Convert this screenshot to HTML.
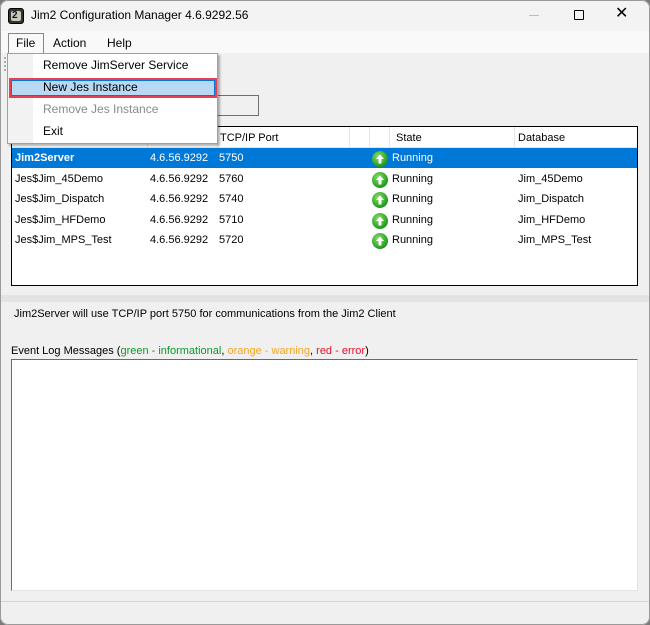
<!DOCTYPE html>
<html><head><style>
*{margin:0;padding:0;box-sizing:border-box}
body{width:650px;height:625px;background:#7a7a7a;font-family:"Liberation Sans",sans-serif;font-size:11px;color:#000;position:relative;overflow:hidden}
.win{position:absolute;left:0;top:0;width:650px;height:625px;background:#f0f0f0;border-radius:8px;overflow:hidden}
.bord{position:absolute;left:0;top:0;width:650px;height:625px;border-radius:8px;box-shadow:inset 0 0 0 1px #9a9a9a;pointer-events:none}
.a{position:absolute;white-space:nowrap}
.title{position:absolute;left:0;top:0;width:650px;height:31px;background:#f3f3f3}
.menubar{position:absolute;left:0;top:31px;width:650px;height:22px;background:#f9f9f9}
.list{position:absolute;left:11px;top:126px;width:627px;height:160px;background:#fff;border:1px solid #000}
.hdr{position:absolute;left:0;top:0;width:625px;height:21px;background:#fff;border-bottom:1px solid #e5e5e5}
.hs{position:absolute;top:0;width:1px;height:21px;background:#e5e5e5}
.row{position:absolute;left:0;width:625px;height:20px}
.row .a{top:4px}
.ic{position:absolute;width:16px;height:16px;top:3px!important;border-radius:50%;background:radial-gradient(circle at 40% 35%,#8ee06a,#1e9a1e 70%,#0e6a0e);}
.menu{position:absolute;left:7px;top:53px;width:211px;height:91px;background:#fff;border:1px solid #a0a0a0;box-shadow:2px 2px 2px rgba(0,0,0,.3)}
</style></head><body>
<div class="win">
<div class="title"></div>
<div class="a" style="left:8px;top:8px;width:16px;height:16px;background:#333;border-radius:3px;border:1px solid #000"><div style="position:absolute;left:2px;top:2px;width:10px;height:10px;background:#c8c8b8;border-radius:2px"></div><div class="a" style="left:3px;top:1px;font-size:10px;font-weight:bold;color:#111">2</div></div>
<div class="a" style="left:31px;top:8px;font-size:12px">Jim2 Configuration Manager 4.6.9292.56</div>
<div class="a" style="left:529px;top:15px;width:10px;height:1px;background:#bbb"></div>
<div class="a" style="left:574px;top:10px;width:10px;height:10px;border:1px solid #000;border-radius:1px"></div>
<div class="a" style="left:615px;top:4px;font-size:16px;line-height:20px">✕</div>
<div class="menubar"></div>
<div class="a" style="left:8px;top:33px;width:36px;height:21px;border:1px solid #888;border-bottom:none;background:#f9f9f9"></div>
<div class="a" style="left:16px;top:36px;font-size:12px">File</div>
<div class="a" style="left:53px;top:36px;font-size:12px">Action</div>
<div class="a" style="left:107px;top:36px;font-size:12px">Help</div>
<div class="a" style="left:4px;top:57px;width:2px;height:14px;border-left:2px dotted #aaa"></div>
<div class="a" style="left:215px;top:95px;width:44px;height:21px;border:1px solid #707070"></div>
<div class="list">
<div class="hdr">
<div class="hs" style="left:135px"></div><div class="hs" style="left:205px"></div><div class="hs" style="left:337px"></div><div class="hs" style="left:357px"></div><div class="hs" style="left:377px"></div><div class="hs" style="left:502px"></div>
<div class="a" style="left:208px;top:5px">TCP/IP Port</div>
<div class="a" style="left:384px;top:5px">State</div>
<div class="a" style="left:506px;top:5px">Database</div>
</div>
<div class="row" style="top:21px;background:#0078d7;color:#fff"><div class="a" style="left:3px;font-weight:bold">Jim2Server</div><div class="a" style="left:138px">4.6.56.9292</div><div class="a" style="left:207px">5750</div><svg class="a ic" style="left:360px" viewBox="0 0 16 16"><path d="M8 3.5L4 8h2.5v4.5h3V8H12z" fill="#fff"/></svg><div class="a" style="left:380px">Running</div></div>
<div class="row" style="top:42px"><div class="a" style="left:3px">Jes$Jim_45Demo</div><div class="a" style="left:138px">4.6.56.9292</div><div class="a" style="left:207px">5760</div><svg class="a ic" style="left:360px" viewBox="0 0 16 16"><path d="M8 3.5L4 8h2.5v4.5h3V8H12z" fill="#fff"/></svg><div class="a" style="left:380px">Running</div><div class="a" style="left:506px">Jim_45Demo</div></div>
<div class="row" style="top:62px"><div class="a" style="left:3px">Jes$Jim_Dispatch</div><div class="a" style="left:138px">4.6.56.9292</div><div class="a" style="left:207px">5740</div><svg class="a ic" style="left:360px" viewBox="0 0 16 16"><path d="M8 3.5L4 8h2.5v4.5h3V8H12z" fill="#fff"/></svg><div class="a" style="left:380px">Running</div><div class="a" style="left:506px">Jim_Dispatch</div></div>
<div class="row" style="top:83px"><div class="a" style="left:3px">Jes$Jim_HFDemo</div><div class="a" style="left:138px">4.6.56.9292</div><div class="a" style="left:207px">5710</div><svg class="a ic" style="left:360px" viewBox="0 0 16 16"><path d="M8 3.5L4 8h2.5v4.5h3V8H12z" fill="#fff"/></svg><div class="a" style="left:380px">Running</div><div class="a" style="left:506px">Jim_HFDemo</div></div>
<div class="row" style="top:103px"><div class="a" style="left:3px">Jes$Jim_MPS_Test</div><div class="a" style="left:138px">4.6.56.9292</div><div class="a" style="left:207px">5720</div><svg class="a ic" style="left:360px" viewBox="0 0 16 16"><path d="M8 3.5L4 8h2.5v4.5h3V8H12z" fill="#fff"/></svg><div class="a" style="left:380px">Running</div><div class="a" style="left:506px">Jim_MPS_Test</div></div>
</div>
<div class="a" style="left:0;top:295px;width:650px;height:7px;background:#e3e3e3"></div>
<div class="a" style="left:14px;top:308px">Jim2Server will use TCP/IP port 5750 for communications from the Jim2 Client</div>
<div class="a" style="left:11px;top:345px">Event Log Messages (<span style="color:#0a9a2a">green - informational</span>, <span style="color:#f5a623">orange - warning</span>, <span style="color:#e8102a">red - error</span>)</div>
<div class="a" style="left:11px;top:359px;width:627px;height:232px;background:#fff;border:1px solid #e3e3e3;border-top-color:#6a6a6a;border-left-color:#6a6a6a"></div>
<div class="a" style="left:1px;top:601px;width:648px;height:1px;background:#d4d4d4"></div>
<div class="menu">
<div class="a" style="left:0;top:0;width:25px;height:89px;background:#f2f2f2"></div>
<div class="a" style="left:35px;top:4px;font-size:12px">Remove JimServer Service</div>
<div class="a" style="left:1px;top:24px;width:208px;height:20px;background:#b8d8f3;border:2px solid #e84050;box-shadow:0 0 0 1px #0078d7 inset"></div>
<div class="a" style="left:35px;top:26px;font-size:12px">New Jes Instance</div>
<div class="a" style="left:35px;top:48px;font-size:12px;color:#8a8a8a">Remove Jes Instance</div>
<div class="a" style="left:35px;top:70px;font-size:12px">Exit</div>
</div>
<div class="bord"></div>
</div>
</body></html>
